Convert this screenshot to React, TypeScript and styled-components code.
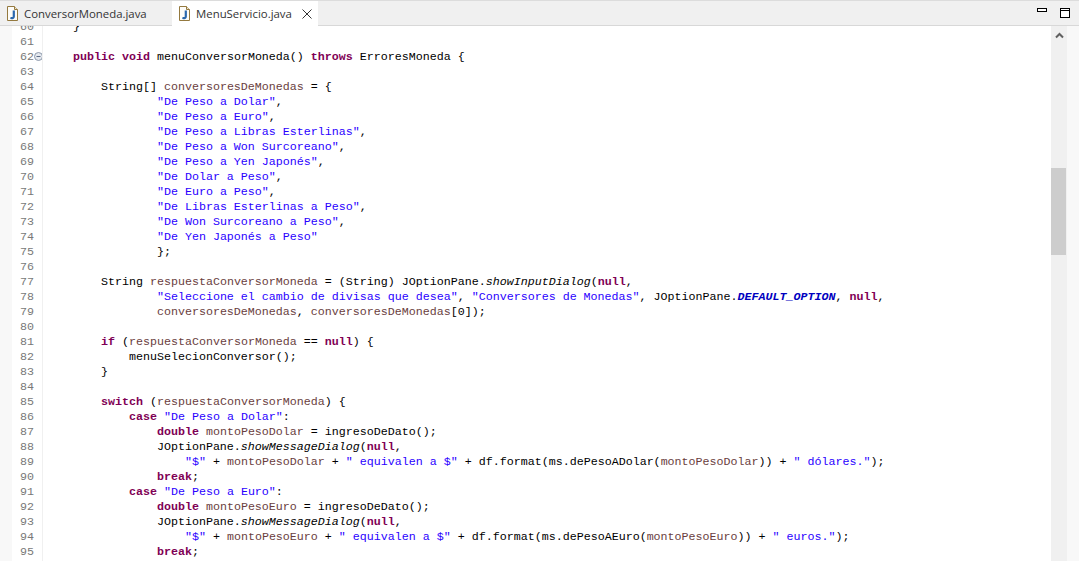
import React from "react";
import styled, { createGlobalStyle } from "styled-components";

type Kind = "k" | "s" | "v" | "i" | "c" | "p";
type Token = [Kind, string];

const GlobalStyle = createGlobalStyle`
  html, body {
    margin: 0;
    height: 100%;
    overflow: hidden;
    background: #fff;
  }
`;

const p = (t: string): Token => ["p", t];
const k = (t: string): Token => ["k", t];
const s = (t: string): Token => ["s", t];
const v = (t: string): Token => ["v", t];
const i = (t: string): Token => ["i", t];
const c = (t: string): Token => ["c", t];

const sp = (n: number) => " ".repeat(n);

const listItem = (text: string): Token[] => [p(sp(16)), s(text), p(",")];

const lines: Token[][] = [
  [p(sp(4) + "}")],
  [],
  [p(sp(4)), k("public"), p(" "), k("void"), p(" menuConversorMoneda() "), k("throws"), p(" ErroresMoneda {")],
  [],
  [p(sp(8) + "String[] "), v("conversoresDeMonedas"), p(" = {")],
  listItem('"De Peso a Dolar"'),
  listItem('"De Peso a Euro"'),
  listItem('"De Peso a Libras Esterlinas"'),
  listItem('"De Peso a Won Surcoreano"'),
  listItem('"De Peso a Yen Japonés"'),
  listItem('"De Dolar a Peso"'),
  listItem('"De Euro a Peso"'),
  listItem('"De Libras Esterlinas a Peso"'),
  listItem('"De Won Surcoreano a Peso"'),
  [p(sp(16)), s('"De Yen Japonés a Peso"')],
  [p(sp(16) + "};")],
  [],
  [p(sp(8) + "String "), v("respuestaConversorMoneda"), p(" = (String) JOptionPane."), i("showInputDialog"), p("("), k("null"), p(",")],
  [p(sp(16)), s('"Seleccione el cambio de divisas que desea"'), p(", "), s('"Conversores de Monedas"'), p(", JOptionPane."), c("DEFAULT_OPTION"), p(", "), k("null"), p(",")],
  [p(sp(16)), v("conversoresDeMonedas"), p(", "), v("conversoresDeMonedas"), p("[0]);")],
  [],
  [p(sp(8)), k("if"), p(" ("), v("respuestaConversorMoneda"), p(" == "), k("null"), p(") {")],
  [p(sp(12) + "menuSelecionConversor();")],
  [p(sp(8) + "}")],
  [],
  [p(sp(8)), k("switch"), p(" ("), v("respuestaConversorMoneda"), p(") {")],
  [p(sp(12)), k("case"), p(" "), s('"De Peso a Dolar"'), p(":")],
  [p(sp(16)), k("double"), p(" "), v("montoPesoDolar"), p(" = ingresoDeDato();")],
  [p(sp(16) + "JOptionPane."), i("showMessageDialog"), p("("), k("null"), p(",")],
  [p(sp(20)), s('"$"'), p(" + "), v("montoPesoDolar"), p(" + "), s('" equivalen a $"'), p(" + df.format(ms.dePesoADolar("), v("montoPesoDolar"), p(")) + "), s('" dólares."'), p(");")],
  [p(sp(16)), k("break"), p(";")],
  [p(sp(12)), k("case"), p(" "), s('"De Peso a Euro"'), p(":")],
  [p(sp(16)), k("double"), p(" "), v("montoPesoEuro"), p(" = ingresoDeDato();")],
  [p(sp(16) + "JOptionPane."), i("showMessageDialog"), p("("), k("null"), p(",")],
  [p(sp(20)), s('"$"'), p(" + "), v("montoPesoEuro"), p(" + "), s('" equivalen a $"'), p(" + df.format(ms.dePesoAEuro("), v("montoPesoEuro"), p(")) + "), s('" euros."'), p(");")],
  [p(sp(16)), k("break"), p(";")],
];

const FileIcon = () => (
  <svg width="12" height="15" viewBox="0 0 12 15">
    <path d="M0.5 0.5h7l3 3v11h-10z" fill="#fdfcf8" stroke="#94793f" />
    <path d="M7.5 0.5v3h3" fill="#efe6cc" stroke="#94793f" />
    <path d="M6.8 4.5v6c0 1.4-1.2 1.9-3.4 1.5" fill="none" stroke="#2b68ad" strokeWidth="2.2" />
  </svg>
);

const App = () => (
  <Page>
    <GlobalStyle />
    <TabBar>
      <Tab>
        <FileIcon />
        <TabLabel>ConversorMoneda.java</TabLabel>
      </Tab>
      <Tab $active>
        <FileIcon />
        <TabLabel>MenuServicio.java</TabLabel>
        <CloseIcon width="10" height="10" viewBox="0 0 10 10">
          <path d="M0.5 0.5l9 9M9.5 0.5l-9 9" stroke="#333" fill="none" />
        </CloseIcon>
      </Tab>
      <WindowButtons>
        <svg width="11" height="5" viewBox="0 0 11 5">
          <rect x="0.5" y="0.5" width="9" height="3" fill="#fff" stroke="#000" />
        </svg>
        <svg width="11" height="11" viewBox="0 0 11 11">
          <rect x="0.5" y="0.5" width="9" height="9" fill="#fff" stroke="#000" />
          <path d="M0.5 2.5h9" stroke="#000" />
        </svg>
      </WindowButtons>
    </TabBar>
    <Editor>
      <Ruler />
      <Gutter>
        <Scrolled>
          {lines.map((_, n) => (
            <LineNumber key={n}>
              {60 + n}
              {60 + n === 62 && (
                <FoldMark>
                  <svg width="9" height="9" viewBox="0 0 9 9">
                    <circle cx="4.5" cy="4.5" r="4" fill="#e4e8ee" stroke="#8d99ab" />
                    <path d="M2.5 4.5h4" stroke="#5b6b85" />
                  </svg>
                </FoldMark>
              )}
            </LineNumber>
          ))}
        </Scrolled>
      </Gutter>
      <Code>
        <Scrolled>
          {lines.map((tokens, n) => (
            <CodeLine key={n}>
              {tokens.map(([kind, text], t) => (
                <Tok key={t} $kind={kind}>
                  {text}
                </Tok>
              ))}
            </CodeLine>
          ))}
        </Scrolled>
      </Code>
      <Scrollbar>
        <ArrowUp>
          <svg width="9" height="7" viewBox="0 0 9 7">
            <path d="M1 5.5l3.5-3.5 3.5 3.5" fill="none" stroke="#606060" strokeWidth="2" />
          </svg>
        </ArrowUp>
        <Thumb />
      </Scrollbar>
      <RightMargin />
    </Editor>
  </Page>
);

const Page = styled.div`
  width: 1079px;
  height: 561px;
  display: flex;
  flex-direction: column;
  overflow: hidden;
  background: #fff;
`;

const TabBar = styled.div`
  height: 26px;
  flex: none;
  display: flex;
  align-items: flex-start;
  box-sizing: border-box;
  background: #f0f0f0;
  border-top: 1px solid #dcdcdc;
  border-bottom: 1px solid #d8d8d8;
`;

const Tab = styled.div<{ $active?: boolean }>`
  display: flex;
  align-items: center;
  flex: none;
  box-sizing: border-box;
  height: ${(props) => (props.$active ? "25px" : "24px")};
  width: ${(props) => (props.$active ? "146px" : "172px")};
  padding-left: 7px;
  gap: 5px;
  background: ${(props) => (props.$active ? "#fff" : "#f0f0f0")};
`;

const TabLabel = styled.span`
  font-family: "Open Sans", "Liberation Sans", sans-serif;
  font-size: 11.4px;
  color: #333;
  white-space: nowrap;
`;

const CloseIcon = styled.svg`
  margin-left: 5px;
`;

const WindowButtons = styled.div`
  margin-left: auto;
  display: flex;
  align-items: flex-start;
  box-sizing: border-box;
  gap: 12px;
  padding-top: 7px;
  width: 42px;
`;

const Editor = styled.div`
  flex: 1;
  min-height: 0;
  display: flex;
`;

const Ruler = styled.div`
  width: 12px;
  flex: none;
  background: #f8f8f8;
`;

const Gutter = styled.div`
  width: 31px;
  flex: none;
  box-sizing: border-box;
  overflow: hidden;
  border-right: 1px solid #f0f0f0;
`;

const Scrolled = styled.div`
  margin-top: -6px;
`;

const LineNumber = styled.div`
  position: relative;
  height: 15px;
  line-height: 15px;
  padding-left: 8px;
  font-family: "Liberation Mono", monospace;
  font-size: 11.67px;
  color: #787878;
`;

const FoldMark = styled.span`
  position: absolute;
  left: 22px;
  top: 2px;
  line-height: 0;
`;

const Code = styled.div`
  flex: 1;
  min-width: 0;
  overflow: hidden;
`;

const CodeLine = styled.div`
  height: 15px;
  line-height: 15px;
  padding-left: 2px;
  white-space: pre;
  font-family: "Liberation Mono", monospace;
  font-size: 11.67px;
  color: #000;
`;

const tokenStyles: Record<Kind, string> = {
  p: "",
  k: "color: #7f0055; font-weight: bold;",
  s: "color: #2a00ff;",
  v: "color: #6a3e3e;",
  i: "font-style: italic;",
  c: "color: #0000c0; font-weight: bold; font-style: italic;",
};

const Tok = styled.span<{ $kind: Kind }>`
  ${(props) => tokenStyles[props.$kind]}
`;

const Scrollbar = styled.div`
  width: 16px;
  flex: none;
  background: #f0f0f0;
`;

const ArrowUp = styled.div`
  height: 19px;
  display: flex;
  align-items: center;
  justify-content: center;
`;

const Thumb = styled.div`
  margin-top: 123px;
  width: 15px;
  height: 87px;
  background: #cdcdcd;
`;

const RightMargin = styled.div`
  width: 12px;
  flex: none;
  background: #f8f8f8;
`;

export default App;
